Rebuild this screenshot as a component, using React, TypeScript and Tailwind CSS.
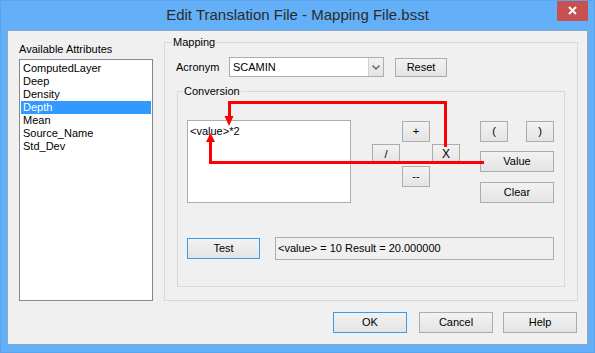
import type { ReactNode } from 'react'

// Win8-style push button
function Btn({ children, className = '', primary = false }: { children: ReactNode; className?: string; primary?: boolean }) {
  return (
    <button
      className={`flex items-center justify-center border bg-linear-to-b from-[#f2f2f2] to-[#e4e4e4] text-[11px] leading-none text-black ${
        primary ? 'border-[#3c9be8]' : 'border-[#acacac]'
      } ${className}`}
    >
      {children}
    </button>
  )
}

const attributes = ['ComputedLayer', 'Deep', 'Density', 'Depth', 'Mean', 'Source_Name', 'Std_Dev']

export default function App() {
  return (
    <div className="relative w-[595px] h-[353px] bg-[#63b0f8] border border-[#5aa4ec] font-['Liberation_Sans',Arial,sans-serif] text-black overflow-hidden">
      {/* Title bar */}
      <div className="h-[29px] flex items-center justify-center text-[15px] text-[#2b2b2b]">
        Edit Translation File - Mapping File.bsst
      </div>
      <div className="absolute -top-px right-[6px] w-[31px] h-[21px] bg-[#c75050] flex items-center justify-center">
        <svg width="9" height="9" viewBox="0 0 9 9">
          <path d="M1 1 L8 8 M8 1 L1 8" stroke="#fff" strokeWidth="2" />
        </svg>
      </div>

      {/* Client area */}
      <div className="ml-[6px] w-[581px] h-[315px] border border-[#8aa6c8] bg-[#f0f0f0] flex flex-col text-[11px]">
        <div className="flex items-start pt-[5px]">
          {/* Attributes list */}
          <div className="ml-[11px] w-[134px] flex flex-col pt-[6px]">
            <div className="h-[14px] leading-[14px]">Available Attributes</div>
            <div className="mt-[3px] h-[242px] border border-[#828790] bg-white pt-[2px] px-px">
              {attributes.map((a) => (
                <div
                  key={a}
                  className={`h-[13px] leading-[13px] pl-[2px] ${a === 'Depth' ? 'bg-[#3399ff] text-white' : ''}`}
                >
                  {a}
                </div>
              ))}
            </div>
          </div>

          {/* Mapping group */}
          <fieldset className="ml-[11px] w-[414px] h-[265px] border border-[#d9d9d9]">
            <legend className="ml-[7px] px-px leading-[13px]">Mapping</legend>
            <div className="mt-[8px] flex items-center h-[20px] pl-[11px]">
              <div className="w-[53px]">Acronym</div>
              <div className="w-[155px] h-[20px] flex border border-[#abadb3] bg-white">
                <div className="flex-1 flex items-center pl-[3px]">SCAMIN</div>
                <div className="w-[15px] flex items-center justify-center border-l border-[#d0d0d0] bg-linear-to-b from-[#f2f2f2] to-[#e4e4e4]">
                  <svg width="8" height="5" viewBox="0 0 8 5">
                    <path d="M0.5 0.5 L4 4 L7.5 0.5" stroke="#606060" strokeWidth="1.4" fill="none" />
                  </svg>
                </div>
              </div>
              <Btn className="ml-[11px] w-[52px] h-[19px]">Reset</Btn>
            </div>

            {/* Conversion group */}
            <fieldset className="mt-[8px] ml-[12px] w-[388px] h-[202px] border border-[#d9d9d9]">
              <legend className="ml-[5px] px-px leading-[13px]">Conversion</legend>
              <div className="flex items-start">
                <div className="ml-[9px] mt-[22px] w-[164px] h-[83px] border border-[#abadb3] bg-white pl-[2px] pt-[4px] leading-[13px]">
                  &lt;value&gt;*2
                </div>
                <div className="ml-[21px] mt-[23px] grid grid-cols-[28px_28px_28px] grid-rows-[21px_20px_21px] gap-x-[2px] gap-y-[2px]">
                  <Btn className="col-start-2 row-start-1">+</Btn>
                  <Btn className="col-start-1 row-start-2">/</Btn>
                  <Btn className="col-start-3 row-start-2 text-[12px]">X</Btn>
                  <Btn className="col-start-2 row-start-3">--</Btn>
                </div>
                <div className="ml-[20px] mt-[23px] w-[74px] flex flex-col">
                  <div className="flex justify-between">
                    <Btn className="w-[28px] h-[21px]">(</Btn>
                    <Btn className="w-[28px] h-[21px]">)</Btn>
                  </div>
                  <Btn className="mt-[9px] h-[21px]">Value</Btn>
                  <Btn className="mt-[10px] h-[21px]">Clear</Btn>
                </div>
              </div>
              <div className="mt-[34px] flex items-center pl-[9px]">
                <Btn primary className="w-[73px] h-[21px]">Test</Btn>
                <div className="ml-[15px] w-[279px] h-[23px] flex items-center border border-[#abadb3] bg-[#f0f0f0] pl-[2px]">
                  &lt;value&gt; = 10 Result = 20.000000
                </div>
              </div>
            </fieldset>
          </fieldset>
        </div>

        {/* Dialog buttons */}
        <div className="mt-[11px] flex justify-end pr-[10px]">
          <Btn primary className="w-[74px] h-[21px]">OK</Btn>
          <Btn className="ml-[12px] w-[74px] h-[21px]">Cancel</Btn>
          <Btn className="ml-[10px] w-[74px] h-[21px]">Help</Btn>
        </div>
      </div>

      {/* Red annotation arrows */}
      <svg className="absolute -left-px -top-px pointer-events-none" width="595" height="353" viewBox="0 0 595 353">
        <g stroke="#ff0000" strokeWidth="3" fill="none" shapeRendering="crispEdges">
          <path d="M445.5 147 V102 H229 V117" />
          <path d="M484 162 H210.5 V141" />
        </g>
        <polygon points="224.5,116 233.5,116 229,126" fill="#ff0000" />
        <polygon points="206,142 215,142 210.5,133" fill="#ff0000" />
      </svg>
    </div>
  )
}
